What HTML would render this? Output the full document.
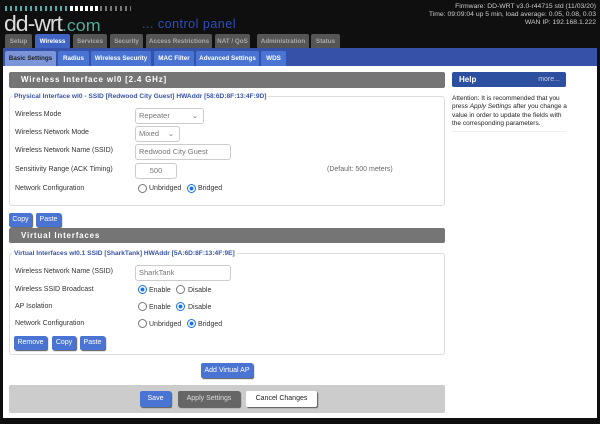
<!DOCTYPE html><html><head><style>
*{margin:0;padding:0;box-sizing:border-box}
body{width:600px;height:424px;background:#0f0f0f;font-family:"Liberation Sans",sans-serif;position:relative;overflow:hidden;font-size:7px;color:#222}
.a{position:absolute;white-space:nowrap}
.tab{position:absolute;top:34px;height:15px;background:#555;color:#aaa;font-weight:bold;font-size:6.3px;line-height:15px;text-align:center;border-radius:2px 2px 0 0;white-space:nowrap;overflow:hidden}
.st{position:absolute;top:51px;height:15px;background:#4a74d4;color:#fff;font-weight:bold;font-size:6.3px;line-height:15px;text-align:center;border-radius:2px 2px 0 0;white-space:nowrap}
.hd{position:absolute;left:9px;width:436px;background:#757575;color:#fff;font-weight:bold;font-size:8px;letter-spacing:.8px;padding-left:12px;border-radius:2px}
.fs{position:absolute;left:9px;width:436px;border:1px solid #ddd;border-radius:3px}
.lg{position:absolute;background:#fff;color:#3a54a8;font-weight:bold;font-size:6.6px;padding:0 2px;white-space:nowrap}
.lb{position:absolute;left:15px;font-size:7px;color:#333}
.in{position:absolute;left:135px;border:1px solid #ccc;border-radius:3px;height:16px;background:#fff;color:#777;font-size:7.5px;line-height:14px;padding-left:3px;white-space:nowrap}
.btn{position:absolute;background:#4a74d4;color:#fff;font-size:7px;text-align:center;border-radius:2px;box-shadow:1px 1px 1px #555;line-height:14px;height:14px;white-space:nowrap}
.r{position:absolute;width:9px;height:9px;border:1px solid #777;border-radius:50%;background:#fff}
.r.on{border-color:#1a73e8;background:radial-gradient(circle,#1a73e8 35%,#fff 45%)}
.rt{position:absolute;font-size:7px;color:#333}
</style></head><body>
<div class="a" style="left:5px;top:6px;width:126px;height:5px;background:repeating-linear-gradient(90deg,#5aa 0 2px,transparent 2px 5px)"></div>
<div class="a" style="left:70px;top:6px;width:30px;height:5px;background:repeating-linear-gradient(90deg,#fff 0 3px,transparent 3px 5px)"></div>
<div class="a" style="left:100px;top:6px;width:31px;height:5px;background:repeating-linear-gradient(90deg,#777 0 2px,transparent 2px 5px)"></div>
<div class="a" style="left:4px;top:11px;font-size:22px;color:#ddd;letter-spacing:-1px;transform:scaleX(1.05);transform-origin:left">dd-wrt<span style="color:#5a9;font-size:17px;letter-spacing:0">.com</span></div>
<div class="a" style="left:142px;top:17px;font-size:12.5px;color:#2b4fc0;letter-spacing:.5px">... control panel</div>
<div class="a" style="right:4px;top:3px;text-align:right;color:#ccc;font-size:6.8px;line-height:8px">Firmware: DD-WRT v3.0-r44715 std (11/03/20)<br>Time: 09:09:04 up 5 min, load average: 0.05, 0.08, 0.03<br>WAN IP: 192.168.1.222</div>
<div class="tab" style="left:5px;width:27px">Setup</div>
<div class="tab" style="left:35px;width:35px;background:#3f64c4;color:#fff">Wireless</div>
<div class="tab" style="left:73px;width:34px">Services</div>
<div class="tab" style="left:110px;width:33px">Security</div>
<div class="tab" style="left:146px;width:66px">Access Restrictions</div>
<div class="tab" style="left:215px;width:35px">NAT / QoS</div>
<div class="tab" style="left:257px;width:52px">Administration</div>
<div class="tab" style="left:311px;width:29px">Status</div>
<div class="a" style="left:3px;top:48px;width:594px;height:18px;background:#3552a8"></div>
<div class="st" style="left:5px;width:51px;background:#7b95d8;color:#222">Basic Settings</div>
<div class="st" style="left:58px;width:31px">Radius</div>
<div class="st" style="left:91px;width:60px">Wireless Security</div>
<div class="st" style="left:154px;width:40px">MAC Filter</div>
<div class="st" style="left:196px;width:63px">Advanced Settings</div>
<div class="st" style="left:261px;width:25px">WDS</div>
<div class="a" style="left:3px;top:66px;width:594px;height:352px;background:#fff"></div>
<div class="hd" style="top:72px;height:16px;line-height:16px">Wireless Interface wl0 [2.4 GHz]</div>
<div class="fs" style="top:96px;height:110px"></div>
<div class="lg" style="left:12px;top:93px">Physical Interface wl0 - SSID [Redwood City Guest] HWAddr [58:6D:8F:13:4F:9D]</div>
<div class="lb" style="top:111px">Wireless Mode</div>
<div class="in" style="top:108px;width:69px">Repeater<span style="position:absolute;right:5px">⌄</span></div>
<div class="lb" style="top:129px">Wireless Network Mode</div>
<div class="in" style="top:126px;width:45px">Mixed<span style="position:absolute;right:5px">⌄</span></div>
<div class="lb" style="top:147px">Wireless Network Name (SSID)</div>
<div class="in" style="top:144px;width:96px">Redwood City Guest</div>
<div class="lb" style="top:166px">Sensitivity Range (ACK Timing)</div>
<div class="in" style="top:163px;width:42px;text-align:center;padding:0">500</div>
<div class="rt" style="left:327px;top:166px;color:#666">(Default: 500 meters)</div>
<div class="lb" style="top:185px">Network Configuration</div>
<div class="r" style="left:138px;top:184px"></div><div class="rt" style="left:149px;top:185px">Unbridged</div>
<div class="r on" style="left:187px;top:184px"></div><div class="rt" style="left:198px;top:185px">Bridged</div>
<div class="btn" style="left:9px;top:213px;width:23px">Copy</div>
<div class="btn" style="left:36px;top:213px;width:25px">Paste</div>
<div class="hd" style="top:228px;height:15px;line-height:15px">Virtual Interfaces</div>
<div class="fs" style="top:253px;height:102px"></div>
<div class="lg" style="left:12px;top:250px">Virtual Interfaces wl0.1 SSID [SharkTank] HWAddr [5A:6D:8F:13:4F:9E]</div>
<div class="lb" style="top:268px">Wireless Network Name (SSID)</div>
<div class="in" style="top:265px;width:96px">SharkTank</div>
<div class="lb" style="top:286px">Wireless SSID Broadcast</div>
<div class="r on" style="left:138px;top:285px"></div><div class="rt" style="left:149px;top:287px">Enable</div>
<div class="r" style="left:176px;top:285px"></div><div class="rt" style="left:188px;top:287px">Disable</div>
<div class="lb" style="top:303px">AP Isolation</div>
<div class="r" style="left:138px;top:302px"></div><div class="rt" style="left:149px;top:304px">Enable</div>
<div class="r on" style="left:176px;top:302px"></div><div class="rt" style="left:188px;top:304px">Disable</div>
<div class="lb" style="top:320px">Network Configuration</div>
<div class="r" style="left:138px;top:319px"></div><div class="rt" style="left:149px;top:321px">Unbridged</div>
<div class="r on" style="left:187px;top:319px"></div><div class="rt" style="left:198px;top:321px">Bridged</div>
<div class="btn" style="left:14px;top:336px;width:33px">Remove</div>
<div class="btn" style="left:52px;top:336px;width:24px">Copy</div>
<div class="btn" style="left:80px;top:336px;width:25px">Paste</div>
<div class="btn" style="left:201px;top:363px;width:52px;height:15px;line-height:15px">Add Virtual AP</div>
<div class="a" style="left:9px;top:385px;width:436px;height:28px;background:#ccc;border-radius:2px"></div>
<div class="btn" style="left:140px;top:391px;width:31px;height:16px;line-height:16px">Save</div>
<div class="btn" style="left:178px;top:391px;width:62px;height:16px;line-height:16px;background:#666;color:#ddd">Apply Settings</div>
<div class="btn" style="left:246px;top:391px;width:71px;height:16px;line-height:16px;background:#fff;color:#222">Cancel Changes</div>
<div class="a" style="left:452px;top:72px;width:114px;height:15px;background:#2c4fa0;border-radius:2px;color:#fff;font-weight:bold;font-size:8px;line-height:15px;padding-left:7px">Help<span style="position:absolute;right:6px;font-weight:normal;font-size:7px;color:#ccd">more...</span></div>
<div class="a" style="left:452px;top:95px;width:118px;font-size:6.5px;line-height:8.3px;color:#222;white-space:normal">Attention: It is recommended that you press <i>Apply Settings</i> after you change a value in order to update the fields with the corresponding parameters.</div>
<div class="a" style="left:452px;top:131px;width:114px;height:1px;background:#eee"></div>
</body></html>
